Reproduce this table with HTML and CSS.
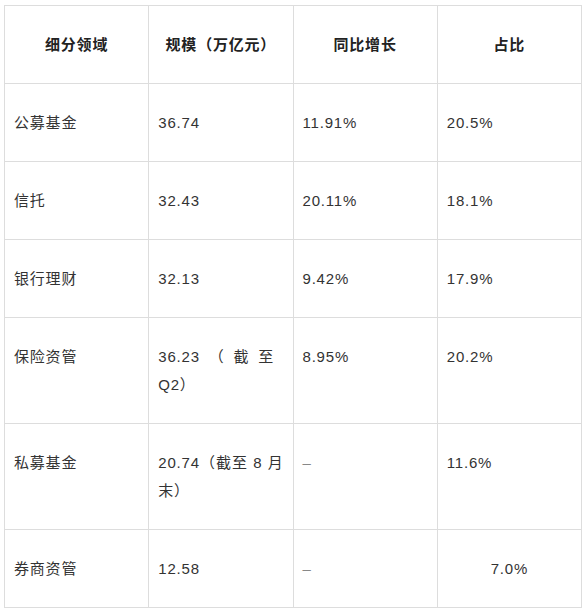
FILE: index.html
```html
<!DOCTYPE html>
<html lang="zh">
<head>
<meta charset="utf-8">
<link rel="stylesheet" href="styles.css">
</head>
<body>
<table class="data">
  <colgroup><col class="c"><col class="c"><col class="c"><col class="c"></colgroup>
  <thead>
    <tr><th>细分领域</th><th>规模（万亿元）</th><th>同比增长</th><th>占比</th></tr>
  </thead>
  <tbody>
    <tr><td>公募基金</td><td>36.74</td><td>11.91%</td><td>20.5%</td></tr>
    <tr><td>信托</td><td>32.43</td><td>20.11%</td><td>18.1%</td></tr>
    <tr><td>银行理财</td><td>32.13</td><td>9.42%</td><td>17.9%</td></tr>
    <tr><td>保险资管</td><td class="spread">36.23 （ 截 至 Q2）</td><td>8.95%</td><td>20.2%</td></tr>
    <tr><td>私募基金</td><td>20.74（截至 8 月末）</td><td class="dash">–</td><td>11.6%</td></tr>
    <tr><td>券商资管</td><td>12.58</td><td class="dash">–</td><td class="center">7.0%</td></tr>
  </tbody>
</table>
</body>
</html>
```
FILE: styles.css
```css
html, body {
  margin: 0;
  padding: 0;
  background: #fff;
}
body {
  padding: 5px 0 0 4px;
}
.data {
  border-collapse: collapse;
  table-layout: fixed;
  width: 578px;
  font-family: "Liberation Sans", "Noto Sans CJK SC", sans-serif;
  font-size: 15px;
  line-height: 28px;
  letter-spacing: 0.8px;
  color: #333;
}
.data th,
.data td {
  border: 1px solid #dddddd;
  padding: 24.5px 9px;
  vertical-align: top;
  text-align: justify;
}
.data th {
  font-weight: bold;
  text-align: center;
  color: #222;
}
.data td.spread {
  text-align: left;
  word-spacing: 4px;
}
.data td.dash {
  color: #888;
}
.data td.center {
  text-align: center;
}
```
